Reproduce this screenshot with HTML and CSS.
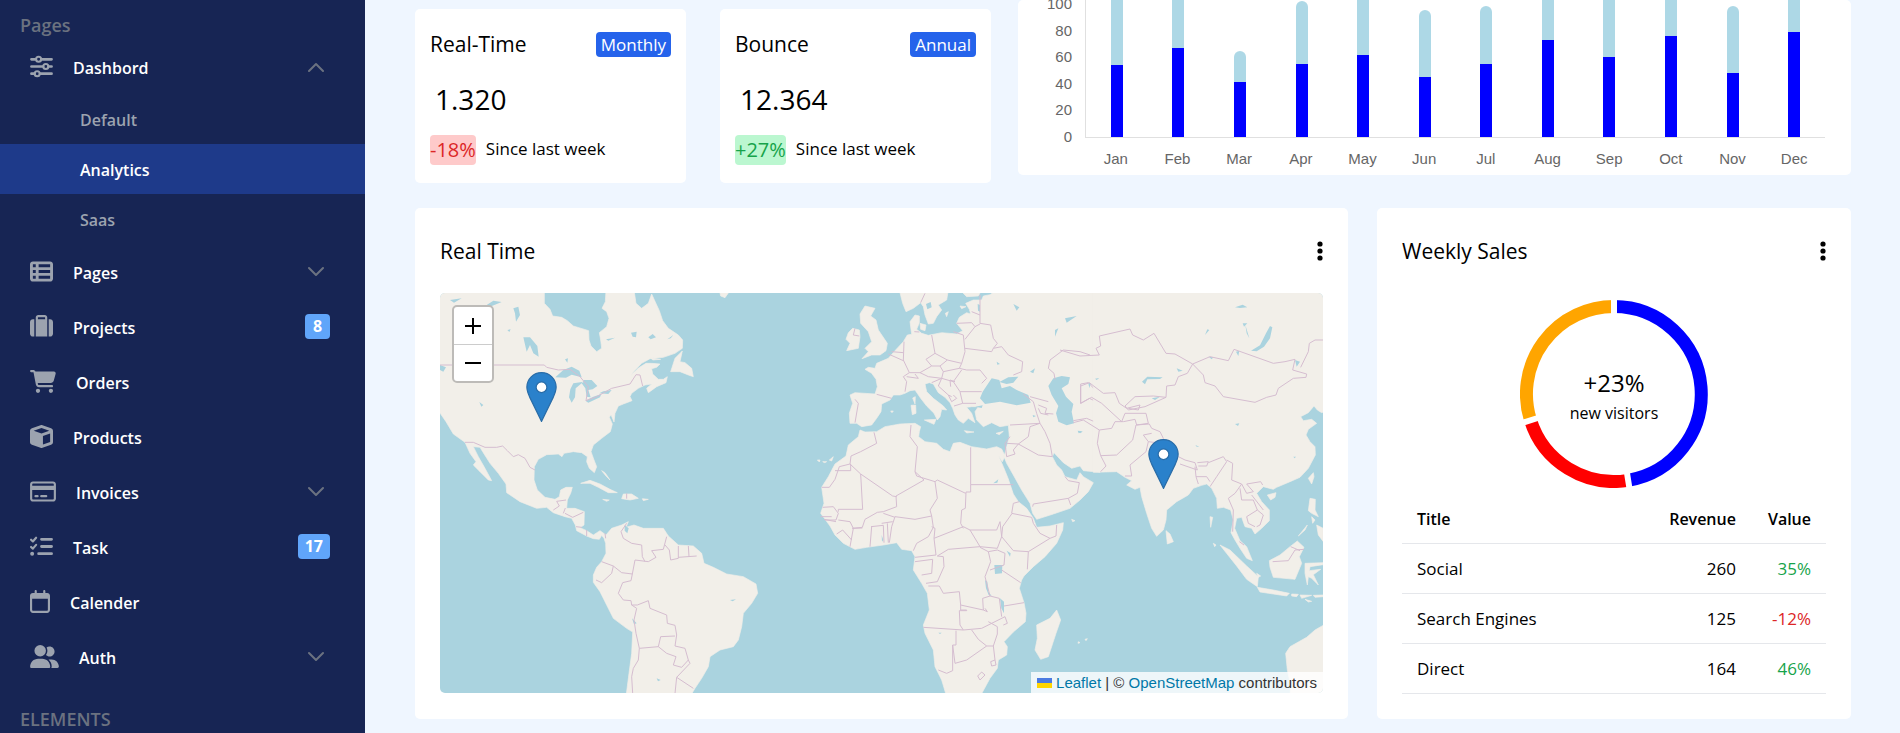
FILE: index.html
```html
<!DOCTYPE html>
<html lang="en">
<head>
<meta charset="utf-8">
<title>Analytics dashboard</title>
<link rel="stylesheet" href="styles.css">
</head>
<body>
<div class="layout">
  <nav class="sidebar">
    <h2 class="section-title">Pages</h2>
    <a class="item" href="#dashboard">
      <svg class="icon" viewBox="0 0 512 512" fill="none" stroke="currentColor"><path stroke-width="60" stroke-linecap="round" d="M32 96H120M250 96H480M32 256H290M415 256H480M32 416H100M225 416H480"/><g stroke-width="46"><circle cx="192" cy="96" r="56"/><circle cx="352" cy="256" r="56"/><circle cx="160" cy="416" r="56"/></g></svg>
      <span>Dashbord</span>
      <svg class="chevron" viewBox="0 0 16 16"><path d="M1 12L8 5l7 7"/></svg>
    </a>
    <a class="subitem" href="#default">Default</a>
    <a class="subitem active" href="#analytics">Analytics</a>
    <a class="subitem" href="#saas">Saas</a>
    <a class="item" href="#pages">
      <svg class="icon" viewBox="0 0 512 512" fill="currentColor"><path fill-rule="evenodd" d="M0 96C0 60.700 28.700 32 64 32H448c35.300 0 64 28.700 64 64V416c0 35.300-28.700 64-64 64H64c-35.300 0-64-28.700-64-64V96zm64 0v64h64V96H64zm384 0H192v64H448V96zM64 224v64h64V224H64zm384 0H192v64H448V224zM64 352v64h64V352H64zm384 0H192v64H448V352z"/></svg>
      <span>Pages</span>
      <svg class="chevron" viewBox="0 0 16 16"><path d="M1 4l7 7 7-7"/></svg>
    </a>
    <a class="item" href="#projects">
      <svg class="icon" viewBox="0 0 512 512" fill="currentColor"><path fill-rule="evenodd" d="M176 56V96H336V56c0-4.400-3.600-8-8-8H184c-4.400 0-8 3.600-8 8zM128 96V56c0-30.900 25.100-56 56-56H328c30.900 0 56 25.100 56 56V480H128V96zM64 96H96V480H64c-35.300 0-64-28.700-64-64V160c0-35.300 28.700-64 64-64zM448 480H416V96h32c35.300 0 64 28.700 64 64V416c0 35.300-28.700 64-64 64z"/></svg>
      <span>Projects</span><b class="count">8</b>
    </a>
    <a class="item" href="#orders">
      <svg class="icon wide" viewBox="0 0 576 512" fill="currentColor"><path d="M0 24C0 10.700 10.700 0 24 0H69.500c22 0 41.500 12.800 50.600 32h411c26.300 0 45.500 25 38.600 50.400l-41 152.300c-8.500 31.400-37 53.300-69.500 53.300H170.700l5.400 28.500c2.200 11.300 12.100 19.500 23.600 19.500H488c13.300 0 24 10.700 24 24s-10.700 24-24 24H199.700c-34.600 0-64.300-24.600-70.700-58.500L77.400 54.500c-.7-3.800-4-6.500-7.900-6.500H24C10.700 48 0 37.300 0 24zM128 464a48 48 0 1 1 96 0 48 48 0 1 1-96 0zm336-48a48 48 0 1 1 0 96 48 48 0 1 1 0-96z"/></svg>
      <span>Orders</span>
    </a>
    <a class="item" href="#products">
      <svg class="icon" viewBox="0 0 512 512" fill="currentColor"><path fill-rule="evenodd" d="M234.500 5.700c13.900-5 29.100-5 43.100 0l192 68.600C495 83.400 512 107.500 512 134.600V377.400c0 27-17 51.200-42.500 60.300l-192 68.600c-13.900 5-29.100 5-43.100 0l-192-68.600C17 428.600 0 404.500 0 377.400V134.600c0-27 17-51.200 42.500-60.300l192-68.600zM256 66L82.300 128 256 190l173.700-62L256 66zm32 368.600l160-57.100v-188L288 246.600v188z"/></svg>
      <span>Products</span>
    </a>
    <a class="item" href="#invoices">
      <svg class="icon wide" viewBox="0 0 576 512" fill="currentColor"><path fill-rule="evenodd" d="M512 80c8.800 0 16 7.200 16 16v32H48V96c0-8.800 7.200-16 16-16H512zm16 144V416c0 8.800-7.200 16-16 16H64c-8.800 0-16-7.200-16-16V224H528zM64 32C28.700 32 0 60.700 0 96V416c0 35.300 28.700 64 64 64H512c35.300 0 64-28.700 64-64V96c0-35.300-28.700-64-64-64H64z"/><path d="M120 336a24 24 0 0 0 0 48h48a24 24 0 0 0 0-48zM248 336a24 24 0 0 0 0 48h112a24 24 0 0 0 0-48z"/></svg>
      <span>Invoices</span>
      <svg class="chevron" viewBox="0 0 16 16"><path d="M1 4l7 7 7-7"/></svg>
    </a>
    <a class="item" href="#task">
      <svg class="icon" viewBox="0 0 512 512" fill="none" stroke="currentColor" stroke-linecap="round" stroke-linejoin="round"><path stroke-width="48" d="M24 106l40 38 72-84M24 266l40 38 72-84"/><path stroke-width="62" d="M256 96H480M256 256H480M192 416H480"/><circle cx="48" cy="416" r="44" fill="currentColor" stroke="none"/></svg>
      <span>Task</span><b class="count">17</b>
    </a>
    <a class="item" href="#calendar">
      <svg class="icon narrow" viewBox="0 0 448 512" fill="currentColor"><path fill-rule="evenodd" d="M152 24c0-13.300-10.700-24-24-24s-24 10.700-24 24V64H64C28.700 64 0 92.700 0 128V448c0 35.300 28.700 64 64 64H384c35.300 0 64-28.700 64-64V128c0-35.300-28.700-64-64-64H344V24c0-13.300-10.700-24-24-24s-24 10.700-24 24V64H152V24zM48 192H400V448c0 8.800-7.200 16-16 16H64c-8.800 0-16-7.200-16-16V192z"/></svg>
      <span>Calender</span>
    </a>
    <a class="item" href="#auth">
      <svg class="icon widest" viewBox="0 0 640 512" fill="currentColor"><path d="M96 128a128 128 0 1 1 256 0A128 128 0 1 1 96 128zM0 482.300C0 383.800 79.800 304 178.300 304h91.400C368.200 304 448 383.800 448 482.300c0 16.400-13.300 29.700-29.700 29.700H29.700C13.300 512 0 498.700 0 482.300zM609.300 512H471.400c5.400-9.400 8.600-20.300 8.600-32v-8c0-60.700-27.100-115.200-69.800-151.800c2.400-.1 4.700-.2 7.100-.2h61.400C567.800 320 640 392.200 640 481.300c0 17-13.800 30.700-30.700 30.700zM432 256c-31 0-59-12.600-79.300-32.900C372.400 196.500 384 163.600 384 128c0-26.800-6.600-52.100-18.300-74.300C384.300 40.100 407.200 32 432 32c61.900 0 112 50.100 112 112s-50.100 112-112 112z"/></svg>
      <span>Auth</span>
      <svg class="chevron" viewBox="0 0 16 16"><path d="M1 4l7 7 7-7"/></svg>
    </a>
    <h2 class="section-title elements">ELEMENTS</h2>
  </nav>

  <main class="content">
    <div class="row-top">
      <div class="stats">
        <section class="card stat">
          <div class="stat-head"><h3 class="title">Real-Time</h3><span class="period">Monthly</span></div>
          <p class="number">1.320</p>
          <p class="trend"><span class="change down">-18%</span><span>Since last week</span></p>
        </section>
        <section class="card stat">
          <div class="stat-head"><h3 class="title">Bounce</h3><span class="period">Annual</span></div>
          <p class="number">12.364</p>
          <p class="trend"><span class="change up">+27%</span><span>Since last week</span></p>
        </section>
      </div>
      <section class="card chart">
        <div class="y-axis"><span>100</span><span>80</span><span>60</span><span>40</span><span>20</span><span>0</span></div>
        <div class="plot">
          <div class="bar" style="height:180px"><i style="height:72px"></i></div>
          <div class="bar" style="height:200px"><i style="height:89px"></i></div>
          <div class="bar" style="height:86px"><i style="height:55px"></i></div>
          <div class="bar" style="height:136px"><i style="height:73px"></i></div>
          <div class="bar" style="height:180px"><i style="height:82px"></i></div>
          <div class="bar" style="height:127px"><i style="height:60px"></i></div>
          <div class="bar" style="height:131px"><i style="height:73px"></i></div>
          <div class="bar" style="height:200px"><i style="height:97px"></i></div>
          <div class="bar" style="height:180px"><i style="height:80px"></i></div>
          <div class="bar" style="height:200px"><i style="height:101px"></i></div>
          <div class="bar" style="height:131px"><i style="height:64px"></i></div>
          <div class="bar" style="height:200px"><i style="height:105px"></i></div>
        </div>
        <div class="x-axis"><span>Jan</span><span>Feb</span><span>Mar</span><span>Apr</span><span>May</span><span>Jun</span><span>Jul</span><span>Aug</span><span>Sep</span><span>Oct</span><span>Nov</span><span>Dec</span></div>
      </section>
    </div>

    <div class="row-bottom">
      <section class="card panel">
        <div class="panel-head"><h3 class="title">Real Time</h3>
          <button class="menu" type="button" aria-label="Map options"><svg viewBox="0 0 6 20"><circle cx="3" cy="3" r="2.600"/><circle cx="3" cy="10" r="2.600"/><circle cx="3" cy="17" r="2.600"/></svg></button></div>
        <div class="map">
          <svg class="tiles" viewBox="0 0 2649 1200" preserveAspectRatio="xMidYMid slice" aria-hidden="true">
            <g transform="translate(-30 -39)">
              <g class="land">
                <path d="M20 30H343V70L360 88 368 108 395 112 412 122 430 138 476 152 477 180 483 198 500 215 515 205 512 180 508 158 530 140 537 115 530 95 516 85 526 65 528 30H612L618 70 635 85 655 70 665 42 680 75 688 92 698 122 715 145 745 165 758 180 757 205 735 220 700 232 660 236 635 250 615 270 603 286 625 264 648 250 665 250 690 252 680 262 665 266 668 282 685 298 700 298 712 290 708 308 680 320 655 338 650 325 665 312 645 315 625 325 605 340 600 350 606 362 580 372 565 378 555 400 552 426 543 404 538 412 547 432 541 455 515 475 490 495 483 515 492 540 500 560 493 578 478 565 470 545 472 530 455 518 430 515 402 520 396 530 385 522 350 524 325 538 313 560 312 600 322 630 345 652 375 658 388 650 392 630 408 622 427 622 422 640 412 660 410 685 435 685 463 695 462 735 450 743 470 752 490 765 510 752 528 765 545 745 575 735 595 725 588 742 612 735 640 745 700 745 715 768 745 795 790 798 815 820 822 850 850 862 890 882 940 890 978 912 983 940 965 970 940 1000 935 1040 925 1080 910 1100 870 1110 840 1130 835 1160 815 1195 795 1225 780 1250H588L597 1180 605 1120 608 1056 590 1045 550 1015 530 975 510 935 490 907 490 885 500 862 515 845 528 820 527 790 522 775 515 766 508 778 490 776 470 768 440 752 436 735 425 715 405 710 370 698 350 682 320 685 270 665 230 638 228 612 205 580 180 550 158 515 150 502 130 500 145 530 165 565 185 602 175 600 150 575 130 555 138 545 120 520 105 487 70 462 48 425 20 385Z"/>
                <path d="M757 213L735 235 722 275 750 275 775 285 790 290 785 265 765 248 750 245ZM452 610L480 601 510 612 540 628 562 638 535 638 505 622 480 610ZM575 656L580 642 605 642 625 655 600 660ZM518 658L538 660 530 664ZM637 656L655 658 640 662ZM868 30L872 48 885 53 895 39V30ZM692 238L668 240 662 234ZM515 572L525 578 540 600 528 588Z"/>
              </g>
              <g class="lake"><path d="M376 292L400 270 425 260 448 272 455 292 425 284 408 293ZM430 310L421 328 417 352 425 368 435 352 437 325 455 310 462 305ZM462 300L485 300 502 318 488 328 475 330 482 352 470 350 466 325 455 310ZM466 362L490 350 514 342 510 352 475 368ZM508 340L520 334 545 330 535 342ZM280 172L300 172 322 198 326 230 310 220 300 195 290 215ZM250 85L265 80 270 105 258 125 255 100ZM30 255L48 262 40 275 30 270ZM170 75L190 62 215 66 180 80ZM603 158L620 155 618 172 608 170ZM655 172L668 162 678 172 662 178ZM528 178L555 173 535 182ZM712 178L730 165 722 175ZM148 366L160 375 154 380ZM584 735L596 745 592 760 584 752ZM606 1015L620 1030 612 1033ZM680 1195L692 1200 684 1204ZM900 960L918 958 908 964ZM405 238L414 235 412 248ZM498 124L510 118 512 130 502 135ZM232 150L242 148 238 156ZM100 95L125 90 110 100ZM60 60L95 55 72 68Z"/></g>
              <g class="border"><path d="M30 255H343L350 262 385 270 420 268 450 290 475 320 468 362 500 350 545 325 600 312 618 284 630 285 638 318M105 487L130 487 165 502 200 502 218 498 232 512 250 530 265 524 285 535 300 562 315 570M590 730L573 755 580 775 605 790 635 795 637 830 645 845M515 845L550 858 575 878 607 882 603 902 578 908 565 940 580 960 603 962 605 975 622 975 655 962 660 985 710 1005 712 1030 735 1036 740 1065 735 1098 765 1105 775 1140 780 1150 740 1192 735 1240M605 975L620 985 612 1020 618 1060 628 1105 685 1100 692 1070 735 1068M685 1100L710 1120 738 1130 730 1155 755 1162 775 1140M607 882L615 840 655 845 678 832 665 812 700 808 710 770M705 795L718 810 722 840 745 835 745 798M745 832L800 828M775 798L777 830M628 1105L625 1140 610 1165 605 1190 608 1240M740 1192L790 1225M550 858L545 880 515 908 498 900M370 690L388 678 380 664 408 660M406 684L400 700M405 700L428 712 460 697M438 740L455 742M470 750V768M525 760L527 775M590 640V656"/></g>
            </g>
            <g transform="translate(1080 -39)">
              <g class="land">
                <path d="M180 450L195 456 230 455 255 440 300 432 345 430 362 440 358 455 356 470 375 485 410 490 430 508 450 515 460 490 480 487 515 500 560 507 590 500 605 507 615 528 607 545 596 528 610 560 625 597 640 642 655 665 680 685 700 715 710 742 750 738 790 728 788 750 770 790 735 830 700 860 672 888 665 900 658 925 672 968 678 1000 676 1025 640 1056 612 1085 622 1100 620 1125 595 1140 592 1165 570 1195 540 1250H440L425 1200 405 1160 400 1110 375 1060 370 1035 388 990 382 940 365 910 340 870 345 830 335 812 305 808 290 788 250 795 200 802 165 808 130 790 105 765 90 738 62 700 72 670 65 622 85 590 105 552 138 528 145 495 175 470Z"/>
                <path d="M185 440L170 430 150 430 148 400 158 370 150 345 165 338 225 342 232 320 228 298 215 280 195 268 205 262 225 265 230 250 265 235 285 212 310 185 322 165 335 163 330 125 345 105 358 108 358 128 350 148 365 160 385 166 425 158 470 162 488 152 470 130 478 112 500 98 512 102 508 88 497 70 520 60 545 60 550 48 570 44 590 30H900V577L850 572 840 558 815 565 790 548 762 518 757 530 770 555 785 570 795 590 830 600 840 578 850 590 880 608 865 635 840 660 810 685 760 702 710 718 698 700 690 670 665 630 640 585 620 550 612 530 620 500 628 470 625 436 600 440 575 428 550 440 530 420 525 395 535 380 515 380 500 382 515 400 525 428 505 415 490 430 475 420 465 405 458 385 450 368 435 352 415 338 400 312 388 308 375 312 380 335 400 355 430 378 440 390 425 388 420 410 412 420 402 400 380 378 362 355 345 330 330 332 315 340 300 345 280 345 270 360 245 372 243 395 230 415 215 435Z"/>
                <path d="M298 30L308 70 318 95 340 85 362 68 370 80 375 105 385 132 400 130 410 110 425 90 415 75 440 60 445 30ZM360 130L378 135 375 152 362 148ZM180 102L195 78 225 85 212 108 228 120 235 150 262 190 258 212 240 225 215 225 186 236 205 215 195 205 215 185 205 155 182 130ZM145 158L158 145 178 150 180 170 175 205 140 212 150 190 138 178ZM373 420L408 418 402 433ZM333 376L347 375 348 400 337 404ZM338 354L346 350 345 372ZM493 452L522 456 500 459ZM588 460L610 454 598 464ZM272 393L280 393 276 398ZM436 100L445 95 440 110ZM480 78L498 80 485 86ZM480 30H545L535 48 500 50ZM770 990L782 1020 768 1060 745 1130 722 1138 705 1110 712 1075 710 1035 750 1015ZM52 540L60 540 58 546ZM68 545L80 545 74 548ZM88 540L100 530 95 543ZM815 718L825 722 818 725ZM835 1085L840 1088 834 1090ZM855 1078L862 1076 858 1082Z"/>
              </g>
              <g class="lake"><path d="M540 355L548 335 565 310 575 295 598 300 605 325 630 318 650 330 685 345 692 368 650 376 600 365 555 372ZM598 306L625 292 655 290 640 308 620 312ZM526 380L548 376 545 384ZM745 318L760 295 785 288 810 292 805 312 785 325 798 350 820 372 815 395 822 430 800 436 775 425 768 400 775 378 755 345ZM583 855L607 855 606 880 585 882ZM555 900L562 905 565 935 575 948 566 945 558 925ZM600 955L612 965 612 1000 604 985ZM378 72L392 66 395 82 382 88ZM640 72L658 82 650 92ZM690 275L705 265 700 280ZM833 452L848 454 836 460ZM580 610L595 598 592 608ZM620 812L632 820 630 830ZM415 1058L425 1058 420 1062ZM765 150L775 145 765 170ZM795 115L830 108 800 128ZM590 245L600 252 592 254ZM533 72L540 75 540 95 534 92ZM245 765L250 780 246 785ZM698 405L708 408 700 412Z"/></g>
              <g class="border"><path d="M222 457L230 490 182 515 153 528 150 552 118 560 105 598 88 622H65M150 552L182 582 278 648M105 572H152V553M182 582L188 688H115V695M333 435L330 470 352 500 345 575 372 600 288 648 290 680 250 695 232 697 195 718 187 742 157 745M345 575L350 588 405 605 412 600 497 640M512 502V614H640M512 614V636H498L496 685 485 690 482 730 490 745M405 605L412 655 390 690 395 708 345 718 285 710 275 740 268 788M278 648L290 650M395 708L400 742 385 770 350 790 340 812M395 740L405 745 402 775 490 740 510 750 540 800 445 808 412 828 430 830 432 860 412 905 378 910M402 775L408 825 345 832M345 845L398 838 395 880 365 885M385 918H418L430 940 478 935 482 975 550 990 548 955 570 948 555 890 572 845 565 815 540 802M482 975V990H500V992H478L480 1035 490 1050 370 1042M490 1050L545 1045 615 1010 622 1030 610 1035M550 990L562 995 555 985M570 948L598 955 605 1010M612 978L672 968M510 750L590 750 600 725 605 770 592 805 540 800M605 770L640 812 685 815 682 868M685 815L750 775 720 760 700 730 695 712 635 700 640 670 658 665M605 770L608 740 635 702M750 775L768 768 770 735M565 815L592 810 615 820 612 855 570 870M605 870L662 908M515 1050L535 1078 560 1098 580 1098 592 1062 592 1040 565 1025M468 1052V1095H458L465 1150 500 1140 560 1098M458 1095V1172L440 1180 415 1170M580 1098L585 1140 588 1155 575 1158 572 1145 585 1140M533 1188L545 1176 555 1185 540 1200ZM62 710H95M68 682L100 680 115 700 108 720H75M115 720L150 725 160 745 150 800M110 762L128 750 155 780M157 745L187 744M215 740L210 800M213 740L250 736 252 788M262 730L265 788M250 700L285 712M245 730L278 725M72 718L108 725M165 145L160 165 178 168M165 358L175 370 165 428M230 343L275 355M312 185L310 240 328 278 310 290 320 305 315 335M265 222L310 242M275 215L310 218M395 165L405 220 378 238 395 258 360 278 328 278M405 220L442 240 420 258 395 258M442 240L485 250 495 215 490 165 460 155M495 205L575 215 580 205 605 200 625 225 668 245 665 275 640 285M470 130L515 128 525 140 540 132M540 45V130L572 135 580 175 592 190 580 205M515 95L540 105M525 140L495 178M485 250L478 265 500 270 540 270 560 295 545 310M478 265L430 275 420 258M430 275L425 295 460 305 485 270M360 278L385 290 425 295 395 308M320 290L355 295 345 282M425 295L415 318 445 345 455 350M460 305L480 335 545 335M480 335L488 370 462 378M465 305L450 300 452 320M445 345L455 365 470 355 460 345M488 370L528 370M343 155L358 156M375 40L362 68M720 430L630 435M720 430L735 455 750 490 757 530 715 525 655 492 620 490M655 492L685 470 690 440 720 430 710 400 700 365 670 342M690 350L745 365M715 375L740 385 735 400 760 402M715 385L722 400 745 405M655 492L640 510 645 522 620 530 615 490 630 470M795 590L805 602 838 608 832 640 805 655 700 672 698 680M805 655L812 675M765 298L762 280 745 265 750 240 790 210 840 215 870 225M900 170L890 205 900 222M820 422L860 415 895 430 890 455 898 545M842 370V312L865 308 900 345M842 370L868 355 900 370"/></g>
            </g>
            <g transform="translate(1860 -39)">
              <g class="land">
                <path d="M100 30H800V392L785 398 772 390 762 378 745 398 722 410 730 422 755 418 770 430 745 448 738 465 750 485 765 500 766 525 745 565 720 592 690 605 650 622 640 628 610 620 590 640 605 665 628 690 628 722 605 745 585 762 575 745 555 740 545 712 530 715 524 745 540 782 560 800 577 842 560 835 540 805 525 780 513 758 520 720 512 690 490 682 472 685 470 655 455 625 440 612 425 616 400 625 385 645 350 665 320 690 318 720 310 750 290 769 275 745 260 700 245 650 240 622 225 628 200 615 215 602 195 592 170 575 100 577Z"/>
                <path d="M318 752L330 762 340 785 322 792ZM480 795L510 810 560 858 595 890 592 920 560 898 530 858ZM592 922L640 930 688 940 680 948 600 936ZM695 942L715 943 710 950 695 948ZM720 945L755 946 725 955ZM760 946L790 945 790 950 765 952ZM735 958L755 964 745 966ZM628 842L660 825 690 800 712 783 732 802 718 830 725 850 705 898 640 892 630 862ZM735 850L790 848 790 854 750 860 748 872 782 868 760 884 775 915 755 895 745 890 742 915 735 880ZM750 655L766 658 765 690 775 710 755 700 745 692ZM715 768L742 735 735 750ZM755 710L765 720 758 730ZM770 735L790 745V785L775 765ZM745 595L760 578 762 590 755 612ZM622 645L648 638 645 652 632 660ZM800 1030L765 1050 740 1072 690 1100 677 1120 682 1170 692 1215 690 1250H800ZM590 880L602 888 595 892ZM450 710L458 712 452 742ZM460 790L468 795 464 800Z"/>
              </g>
              <g class="lake"><path d="M573 212L600 196 618 160 630 138 637 142 630 175 612 200 590 214ZM246 305L262 290 308 292 300 297 262 298 255 313ZM275 355L300 350 285 360ZM525 432L538 430 534 438ZM85 310L92 310 88 325ZM105 296L118 294 110 300ZM446 230L460 232 455 238ZM528 215L538 212 535 228ZM548 130L562 130 552 140ZM525 82L548 74 562 82 540 84ZM705 240L720 245 710 260ZM55 455L68 455 60 460ZM435 165L442 148 448 150ZM556 135L568 175 560 160ZM350 265L368 272 355 275ZM406 495L418 500 410 500ZM700 530L708 530 704 535Z"/></g>
              <g class="border"><path d="M0 210L60 228 118 225 108 205 122 198 118 168 210 147 218 165 250 180 282 160 318 220 345 222 398 252 450 230 505 242 522 208 570 225 640 250 675 245 705 238 698 270 740 282 738 292 700 295 655 325 648 345 620 352 585 367 490 350 465 318 435 308 430 285 398 252M398 252L382 280 355 290 345 315 320 318 318 352 255 380 205 390 195 378 225 350 280 348 318 352M62 370V318L88 308 130 340 165 338 178 370 200 385 240 375 235 390 205 385M62 370L95 352 125 370 185 425 195 400 258 400 265 430 230 435 225 418 190 425 165 425 155 445 118 450 70 420 40 428M118 450L112 490 122 527 170 525 218 480 228 435 268 432 275 445 300 455 310 475 305 490 265 485 250 465 275 460M122 527L138 558 122 575M265 485L258 515 210 555 215 588 195 588M355 530L375 540 405 548 412 570 360 552M412 548L445 545 440 558 415 558M445 548L490 530 500 545 470 590 450 620M405 560L408 590 415 612M408 590L440 590 450 605M500 540L518 550 515 600 545 612 525 640 505 655 520 690 518 755M545 612L560 640 580 635 560 612 602 605 608 615M540 625L545 660 580 660 592 690 560 710 565 730 585 740M592 690L610 705 600 735 590 740M575 645L610 690M538 785L552 795M638 845L685 842 705 810 732 808M692 800L720 812M722 262L745 215 748 190 765 180 790 180"/></g>
            </g>
          </svg>
          <svg class="marker marker-us" viewBox="0 0 25 41" aria-label="United States marker"><path d="M12.500.5C5.900.5.5 5.900.5 12.400c0 2.800 1.300 6 2.300 8.200L12.500 40.500l9.700-19.900c1-2.200 2.300-5.400 2.300-8.200C24.500 5.900 19.100.5 12.500.5z"/><circle cx="12.500" cy="12.500" r="4.400"/></svg>
          <svg class="marker marker-in" viewBox="0 0 25 41" aria-label="India marker"><path d="M12.500.5C5.900.5.5 5.900.5 12.400c0 2.800 1.300 6 2.300 8.200L12.500 40.500l9.700-19.900c1-2.200 2.300-5.400 2.300-8.200C24.500 5.900 19.100.5 12.500.5z"/><circle cx="12.500" cy="12.500" r="4.400"/></svg>
          <div class="zoom">
            <button type="button" aria-label="Zoom in"><svg viewBox="0 0 16 16"><path d="M0 8H16M8 0V16"/></svg></button>
            <button type="button" aria-label="Zoom out"><svg viewBox="0 0 16 16"><path d="M0 8H16"/></svg></button>
          </div>
          <div class="attribution"><svg viewBox="0 0 15 10"><path fill="#4c7be1" d="M0 0h15v5H0z"/><path fill="#ffd500" d="M0 5h15v5H0z"/></svg> <a href="#leaflet">Leaflet</a> | © <a href="#osm">OpenStreetMap</a> contributors</div>
        </div>
      </section>

      <section class="card panel">
        <div class="panel-head"><h3 class="title">Weekly Sales</h3>
          <button class="menu" type="button" aria-label="Sales options"><svg viewBox="0 0 6 20"><circle cx="3" cy="3" r="2.600"/><circle cx="3" cy="10" r="2.600"/><circle cx="3" cy="17" r="2.600"/></svg></button></div>
        <div class="donut">
          <svg viewBox="-94 -94 188 188" fill="none" aria-hidden="true">
            <g stroke-width="13"><path stroke="blue" d="M0-87.500A87.500 87.500 0 0 1 14.200 86.300"/><path stroke="red" d="M14.200 86.300A87.500 87.500 0 0 1-83.500 26.300"/><path stroke="orange" d="M-83.500 26.300A87.500 87.500 0 0 1 0-87.500"/></g>
            <path stroke="#fff" stroke-width="6" d="M0-75V-100M12.200 74L16.200 99M-71.500 22.500L-95.400 30"/>
          </svg>
          <div class="donut-label"><strong>+23%</strong><span>new visitors</span></div>
        </div>
        <table class="sales">
          <thead><tr><th>Title</th><th>Revenue</th><th>Value</th></tr></thead>
          <tbody>
            <tr><td>Social</td><td>260</td><td class="gain">35%</td></tr>
            <tr><td>Search Engines</td><td>125</td><td class="loss">-12%</td></tr>
            <tr><td>Direct</td><td>164</td><td class="gain">46%</td></tr>
          </tbody>
        </table>
      </section>
    </div>
  </main>
</div>
</body>
</html>
```
FILE: styles.css
```css
* { box-sizing: border-box; }
body { margin: 0; background: #eff6ff; color: #000; font: 17px/24px "Open Sans", "Noto Sans", sans-serif; }
h2, h3, p { margin: 0; font-weight: 400; }
a { text-decoration: none; }
button { padding: 0; border: 0; background: none; cursor: pointer; }
svg { display: block; }

.layout { display: flex; min-height: 100vh; }

.sidebar { flex: 0 0 365px; padding-top: 12px; background: #172554; }
.section-title { height: 27px; padding-left: 20px; font-size: 18px; font-weight: 600; line-height: 26px; color: #6b7280; }
.elements { margin-top: 22px; }
.item { display: flex; align-items: center; gap: 20px; height: 55px; padding: 0 35px 0 30px; color: #fff; font-size: 16px; font-weight: 600; }
.item span { padding-top: 2px; }
.icon { width: 23px; height: 23px; color: #9ca3af; }
.icon.wide { width: 26px; }
.icon.narrow { width: 20px; }
.icon.widest { width: 29px; }
.chevron { width: 16px; height: 16px; margin: 0 6px 0 auto; fill: none; stroke: #6b7280; stroke-width: 2; stroke-linecap: round; stroke-linejoin: round; }
.count { min-width: 25px; margin-left: auto; padding: 0 7px; border-radius: 4px; background: #60a5fa; font-weight: 700; line-height: 25px; text-align: center; }
.subitem { display: block; padding: 3px 0 0 80px; color: #9ca3af; font-size: 16px; font-weight: 600; line-height: 47px; }
.subitem.active { background: #1e3a8a; color: #fff; }

.content { flex: 1; min-width: 0; padding: 0 49px 12px 50px; }
.card { border-radius: 5px; background: #fff; }
.title { font-size: 21px; line-height: 30px; }

.row-top { display: grid; grid-template-columns: 576fr 833fr; gap: 27px; align-items: start; }
.stats { display: grid; grid-template-columns: 1fr 1fr; gap: 34px; padding-top: 9px; }
.stat { height: 174px; padding: 20px 15px 0; }
.stat-head { display: flex; justify-content: space-between; align-items: center; }
.period { padding: 0 5px; border-radius: 4px; background: #2563eb; color: #fff; line-height: 25px; }
.number { padding: 20px 0 0 5px; font-size: 28px; line-height: 40px; }
.trend { display: flex; align-items: flex-start; gap: 10px; padding-top: 16px; line-height: 28px; }
.change { border-radius: 4px; font-size: 20px; line-height: 30px; }
.down { background: #fecaca; color: #dc2626; }
.up { background: #bbf7d0; color: #16a34a; }

.chart { display: grid; grid-template-columns: 54px 1fr; grid-template-rows: 138px 37px; column-gap: 13px; padding-right: 26px; overflow: hidden; color: #666; font: 15px/20px "Liberation Sans", Arial, sans-serif; }
.y-axis { display: flex; flex-direction: column; justify-content: space-between; height: 153px; margin-top: -6px; text-align: right; }
.plot { display: flex; justify-content: space-around; align-items: flex-end; height: 138px; border: solid #e0e0e0; border-width: 0 0 1px 1px; overflow: hidden; }
.bar { display: flex; flex: none; align-items: flex-end; width: 12px; border-radius: 6px 6px 0 0; background: lightblue; }
.bar i { width: 100%; background: blue; }
.x-axis { grid-column: 2; display: grid; grid-template-columns: repeat(12, 1fr); padding-top: 11px; text-align: center; }

.row-bottom { display: grid; grid-template-columns: 933fr 474fr; gap: 29px; margin-top: 25px; }
.panel { padding: 28px 25px 25px; }
.panel-head { display: flex; justify-content: space-between; align-items: center; height: 30px; }
.menu svg { width: 6px; height: 20px; }

.map { position: relative; height: 400px; margin-top: 27px; border-radius: 5px; background: #aad3df; overflow: hidden; }
.tiles { width: 100%; height: 100%; }
.land { fill: #f2efe9; stroke: #f2efe9; stroke-width: 2; stroke-linejoin: round; }
.lake { fill: #aad3df; }
.border { fill: none; stroke: #d5bdd0; stroke-width: 3; stroke-linejoin: round; }
.marker { position: absolute; width: 31px; height: 50px; }
.marker path { fill: #2a81cb; stroke: #2a6da8; stroke-width: 1; }
.marker circle { fill: #fff; stroke: #2a6da8; stroke-width: 1; }
.marker-us { left: 86px; top: 79px; }
.marker-in { left: 708px; top: 146px; }
.zoom { position: absolute; left: 12px; top: 12px; border: 2px solid #bdbbb8; border-radius: 5px; background: #fff; }
.zoom button { display: grid; place-items: center; width: 38px; height: 37px; }
.zoom button + button { border-top: 1px solid #ccc; }
.zoom svg { width: 16px; height: 16px; fill: none; stroke: #000; stroke-width: 2; }
.attribution { position: absolute; right: 0; bottom: 0; padding: 0 6px; background: rgba(255, 255, 255, .8); color: #333; font: 15px/21px "Liberation Sans", Arial, sans-serif; }
.attribution svg { display: inline-block; width: 15px; height: 10px; }
.attribution a { color: #0078a8; }

.donut { display: grid; place-items: center; margin-top: 34px; }
.donut > * { grid-area: 1 / 1; }
.donut svg { width: 188px; height: 188px; }
.donut-label { display: flex; flex-direction: column; align-items: center; padding-top: 6px; font-size: 16px; line-height: 28px; }
.donut-label strong { font-size: 24px; font-weight: 400; line-height: 32px; }

.sales { width: 100%; margin-top: 5px; border-collapse: collapse; }
.sales th, .sales td { height: 50px; padding: 2px 15px 0; border-bottom: 1px solid #e5e7eb; text-align: right; }
.sales th { font-weight: 600; font-size: 16px; }
.sales th:first-child, .sales td:first-child { width: 100%; text-align: left; white-space: nowrap; }
.sales th:last-child { padding-left: 17px; }
.gain { color: #16a34a; }
.loss { color: #dc2626; }
```
